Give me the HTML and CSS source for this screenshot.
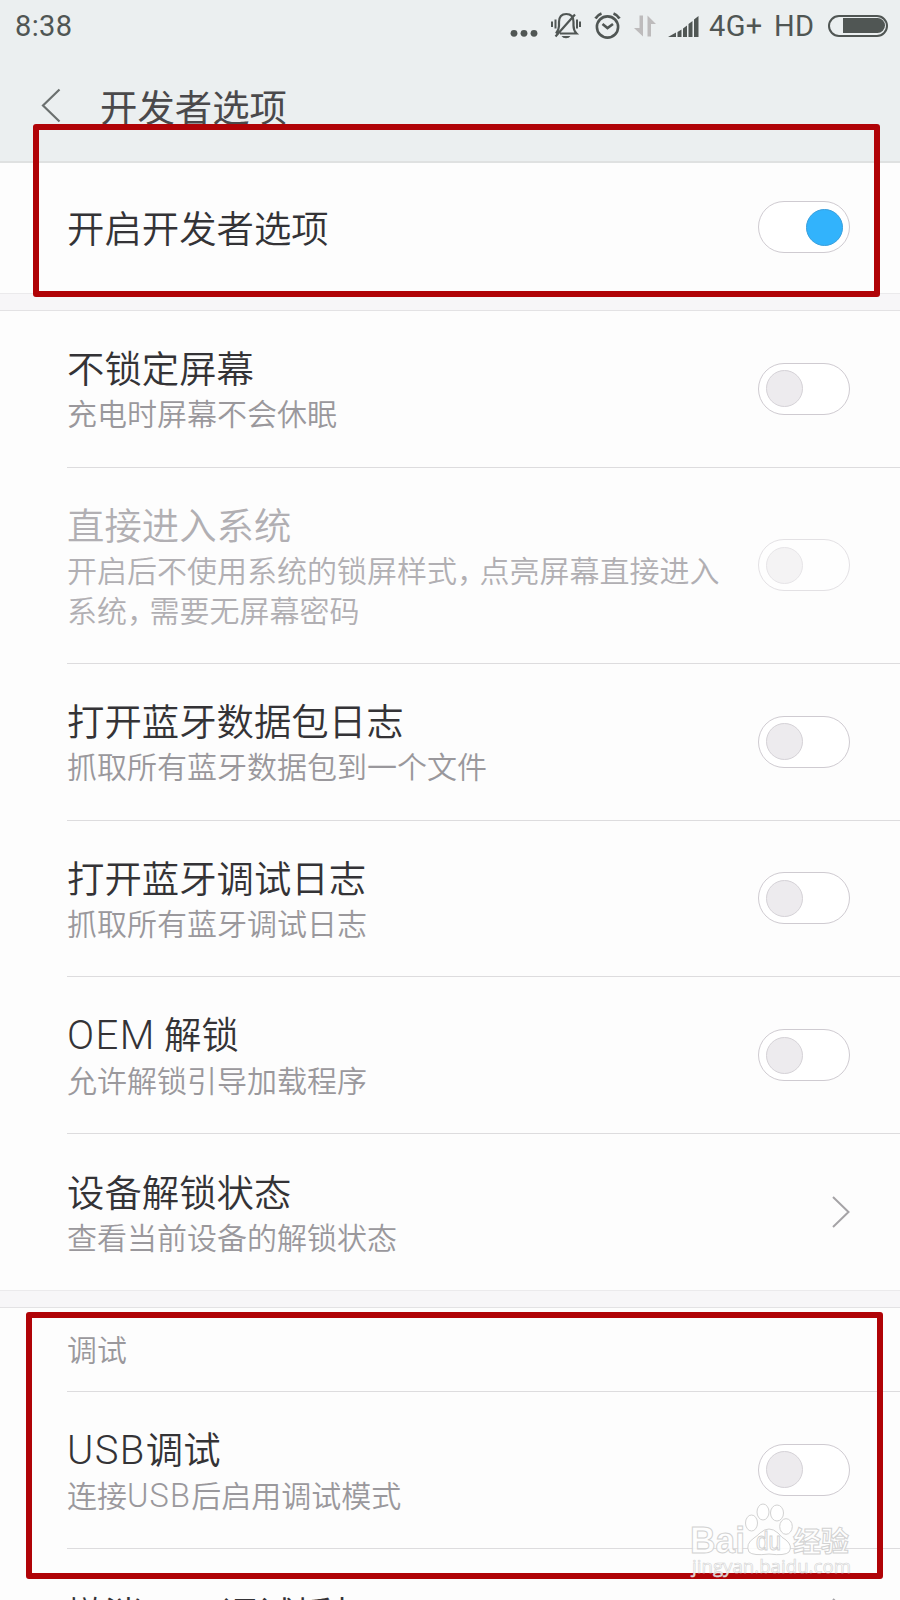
FILE: index.html
```
<!DOCTYPE html>
<html lang="zh-CN">
<head>
<meta charset="utf-8">
<title>开发者选项</title>
<link rel="stylesheet" href="styles.css">
</head>
<body>
<div class="screen">
  <header class="header">
    <div class="status">
      <span class="time">8:38</span>
      <svg class="status-icons" width="190" height="50" viewBox="0 0 190 50">
        <g fill="#505654">
          <circle cx="4" cy="32.300" r="3.400"/><circle cx="14" cy="32.300" r="3.400"/><circle cx="24" cy="32.300" r="3.400"/>
          <path d="M51.500 35h9q-1.200 2.300-4.500 2.300t-4.500-2.300z"/>
          <path d="M158 36l8-4.500v4.500zM167.500 31l4-2.500v7.500h-4zM173 27.500l4-3v11.500h-4zM178.500 23l4-3v16h-4zM184 18.500l4.500-3.500v21h-4.500z"/>
        </g>
        <g fill="none" stroke="#505654" stroke-width="2">
          <path d="M50 32.500h16.500q-3-3-3-8v-3.500q0-8-7.200-8t-7.300 8v4q0 4-3 7.500M45.500 35.500L65 13.500" stroke-width="2.200"/>
          <path d="M45.500 18.500v9M42 20.500v5.500M67 18.500v9M70 20.500v5.500"/>
          <circle cx="97.500" cy="26" r="10.600" stroke-width="2.600"/>
          <path d="M92.500 23l5 4 5.500-4" stroke-width="2.600"/>
          <path d="M85.500 17.500q2-3.500 6-5M103.500 12.500q4 1.500 6 5" stroke-width="2.800"/>
        </g>
        <path d="M129.500 14.500h3.500V35.500l-9-8.500h5.500zM137.500 35.500V14.500l8.500 8.500h-5v12.500z" fill="#bdbbbc"/>
      </svg>
      <span class="net">4G+</span><span class="hd">HD</span>
      <span class="battery"><span class="charge"></span></span>
    </div>
    <div class="titlebar">
      <svg class="back" width="20" height="36" viewBox="0 0 20 36"><path d="M18.500 1.500L2 17.500l16.500 16" fill="none" stroke="#6b706f" stroke-width="2.200"/></svg>
      <h1 class="heading">开发者选项</h1>
    </div>
  </header>

  <section class="group">
    <div class="row row-single row-first"><div class="copy"><div class="title">开启开发者选项</div></div><span class="switch on"><i class="knob"></i></span></div>
  </section>
  <div class="band"></div>
  <section class="group">
    <div class="row"><div class="copy"><div class="title">不锁定屏幕</div><div class="sub">充电时屏幕不会休眠</div></div><span class="switch"><i class="knob"></i></span></div>
    <div class="row row-tall disabled"><div class="copy"><div class="title">直接进入系统</div><div class="sub">开启后不使用系统的锁屏样式<span class="comma">，</span>点亮屏幕直接进入<br>系统<span class="comma">，</span>需要无屏幕密码</div></div><span class="switch"><i class="knob"></i></span></div>
    <div class="row"><div class="copy"><div class="title">打开蓝牙数据包日志</div><div class="sub">抓取所有蓝牙数据包到一个文件</div></div><span class="switch"><i class="knob"></i></span></div>
    <div class="row"><div class="copy"><div class="title">打开蓝牙调试日志</div><div class="sub">抓取所有蓝牙调试日志</div></div><span class="switch"><i class="knob"></i></span></div>
    <div class="row"><div class="copy"><div class="title"><span class="latin">OEM</span> 解锁</div><div class="sub">允许解锁引导加载程序</div></div><span class="switch"><i class="knob"></i></span></div>
    <div class="row row-last"><div class="copy"><div class="title">设备解锁状态</div><div class="sub">查看当前设备的解锁状态</div></div>
      <svg class="chevron" width="20" height="34" viewBox="0 0 20 34"><path d="M3 2l15.500 15L3 32" fill="none" stroke="#a5a3a6" stroke-width="2"/></svg></div>
  </section>
  <div class="band"></div>
  <section class="group">
    <div class="label">调试</div>
    <div class="row"><div class="copy"><div class="title"><span class="latin">USB</span>调试</div><div class="sub">连接<span class="latin">USB</span>后启用调试模式</div></div><span class="switch"><i class="knob"></i></span></div>
    <div class="row row-single"><div class="copy"><div class="title">撤消<span class="latin">USB</span>调试授权</div></div>
      <svg class="chevron" width="20" height="34" viewBox="0 0 20 34"><path d="M3 2l15.500 15L3 32" fill="none" stroke="#a5a3a6" stroke-width="2"/></svg></div>
  </section>

  <div class="frame frame-top"></div>
  <div class="frame frame-bottom"></div>
  <svg class="watermark" width="170" height="84" viewBox="0 0 170 84">
    <g class="mark">
      <text x="3" y="50" class="wm-brand" textLength="55" lengthAdjust="spacingAndGlyphs">Bai</text>
      <path d="M62 49q-4-8 5-14 3-2 6-5 9-8 18 0 4 5 8 7 7 6 3 12-4 4-20 2-16 2-20-2z"/>
      <ellipse cx="64.500" cy="20" rx="6" ry="8"/><ellipse cx="76" cy="9" rx="6" ry="8"/><ellipse cx="90" cy="10" rx="6.500" ry="8"/><ellipse cx="99" cy="23.500" rx="6.300" ry="7.800"/>
      <text x="69" y="47" class="wm-du" textLength="25" lengthAdjust="spacingAndGlyphs">du</text>
      <text x="106" y="49" class="wm-cn">经验</text>
      <text x="5" y="70" class="wm-url" textLength="159" lengthAdjust="spacingAndGlyphs">jingyan.baidu.com</text>
    </g>
  </svg>
</div>
</body>
</html>
```
FILE: styles.css
```
* { box-sizing: border-box; }
body { margin: 0; background: #fdfdfd; font-family: "Noto Sans CJK SC", sans-serif; font-weight: 350; }
.screen { position: relative; width: 900px; height: 1600px; overflow: hidden; }
.header { height: 163px; background: #ebeff0; border-bottom: 2px solid #dfe1e1; }
.status { display: flex; height: 52px; padding: 0 12px 0 15px; align-items: center; color: #505654; font: 400 29px/50px Roboto, sans-serif; }
.time { margin-right: auto; letter-spacing: .4px; }
.status-icons { margin-right: 9px; }
.net { width: 65px; letter-spacing: .4px; }
.hd { width: 54px; letter-spacing: .4px; }
.battery { display: flex; justify-content: flex-end; width: 60px; height: 22px; margin-top: -1px; padding: 1.500px; border: 2px solid #505654; border-radius: 11px; }
.charge { width: 42px; height: 15px; background: #505654; border-radius: 0 8px 8px 0; }
.titlebar { display: flex; align-items: center; height: 108px; padding-left: 41px; }
.back { margin-right: 39px; }
.heading { margin: 0; color: #4a494b; font-size: 37.400px; font-weight: 400; line-height: 56px; }
.band { height: 18px; background: #f7f6f8; border-top: 1px solid #ebeaec; border-bottom: 1px solid #e3e2e4; }
.row { display: flex; align-items: center; justify-content: space-between; height: 156.600px; margin-left: 67px; padding-right: 50px; border-bottom: 1px solid #dddcde; }
.row-single { height: 130px; border-bottom: 0; }
.row-first .copy { padding-bottom: 2px; }
.row-first .switch { margin-bottom: 2px; }
.row-tall { height: 196.500px; }
.row-last { border-bottom: 0; }
.copy { white-space: nowrap; }
.title { color: #343336; font-size: 37.400px; line-height: 44px; }
.sub { color: #9a989c; font-size: 30px; line-height: 40px; padding-top: 3px; }
.disabled .title, .disabled .sub { color: #b1afb3; }
.title .latin { font: 300 40px/40px Roboto, sans-serif; letter-spacing: 1.400px; }
.sub .latin { font: 300 32.500px/32px Roboto, sans-serif; letter-spacing: 1.200px; }
.comma { letter-spacing: -7.500px; }
.switch { display: flex; flex: none; width: 92px; height: 52px; padding: 6.500px; border: 1px solid #cfcbd1; border-radius: 26px; background: #fff; }
.knob { width: 37px; height: 37px; border: 1px solid #d5d2d7; border-radius: 50%; background: #edebee; }
.switch.on { justify-content: flex-end; }
.switch.on .knob { background: #32b3fc; border-color: #399fdc; }
.disabled .switch { opacity: .55; }
.label { height: 83.500px; margin-left: 67px; border-bottom: 1px solid #dddcde; color: #9a989c; font-size: 29.900px; line-height: 80px; }
.frame { position: absolute; border: 6px solid #b00307; border-radius: 3px; }
.frame-top { left: 33px; top: 124px; width: 847px; height: 173px; }
.frame-bottom { left: 26px; top: 1312px; width: 857px; height: 267px; }
.watermark { position: absolute; left: 687px; top: 1503px; }
.mark { fill: #fff; fill-opacity: .85; stroke: #d2d2d2; stroke-width: 1; }
.wm-brand { font: 700 37px "Liberation Sans", sans-serif; }
.wm-du { font: 400 25px "Liberation Sans", sans-serif; }
.wm-cn { font: 700 28px "Noto Sans CJK SC", sans-serif; }
.wm-url { font: 400 19px "Open Sans", sans-serif; stroke-width: .6; }
```
